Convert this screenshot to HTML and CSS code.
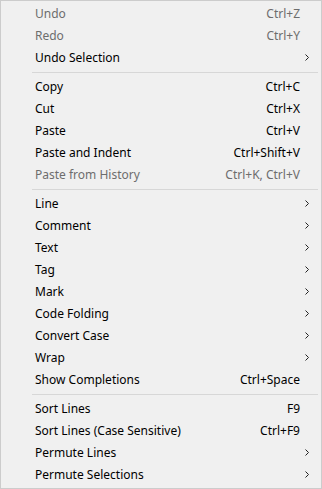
FILE: index.html
```html
<!DOCTYPE html>
<html>
<head>
<meta charset="utf-8">
<link rel="stylesheet" href="styles.css">
</head>
<body>
<div class="menu">
  <div class="item disabled"><span class="label">Undo</span><span class="key">Ctrl+Z</span></div>
  <div class="item disabled"><span class="label">Redo</span><span class="key">Ctrl+Y</span></div>
  <div class="item sub"><span class="label">Undo Selection</span><svg class="chev" viewBox="0 0 4 7"><path d="M0.5 0.5 L3.5 3.5 L0.5 6.5"/></svg></div>
  <div class="sep"></div>
  <div class="item"><span class="label">Copy</span><span class="key">Ctrl+C</span></div>
  <div class="item"><span class="label">Cut</span><span class="key">Ctrl+X</span></div>
  <div class="item"><span class="label">Paste</span><span class="key">Ctrl+V</span></div>
  <div class="item"><span class="label">Paste and Indent</span><span class="key">Ctrl+Shift+V</span></div>
  <div class="item disabled"><span class="label">Paste from History</span><span class="key">Ctrl+K, Ctrl+V</span></div>
  <div class="sep"></div>
  <div class="item sub"><span class="label">Line</span><svg class="chev" viewBox="0 0 4 7"><path d="M0.5 0.5 L3.5 3.5 L0.5 6.5"/></svg></div>
  <div class="item sub"><span class="label">Comment</span><svg class="chev" viewBox="0 0 4 7"><path d="M0.5 0.5 L3.5 3.5 L0.5 6.5"/></svg></div>
  <div class="item sub"><span class="label">Text</span><svg class="chev" viewBox="0 0 4 7"><path d="M0.5 0.5 L3.5 3.5 L0.5 6.5"/></svg></div>
  <div class="item sub"><span class="label">Tag</span><svg class="chev" viewBox="0 0 4 7"><path d="M0.5 0.5 L3.5 3.5 L0.5 6.5"/></svg></div>
  <div class="item sub"><span class="label">Mark</span><svg class="chev" viewBox="0 0 4 7"><path d="M0.5 0.5 L3.5 3.5 L0.5 6.5"/></svg></div>
  <div class="item sub"><span class="label">Code Folding</span><svg class="chev" viewBox="0 0 4 7"><path d="M0.5 0.5 L3.5 3.5 L0.5 6.5"/></svg></div>
  <div class="item sub"><span class="label">Convert Case</span><svg class="chev" viewBox="0 0 4 7"><path d="M0.5 0.5 L3.5 3.5 L0.5 6.5"/></svg></div>
  <div class="item sub"><span class="label">Wrap</span><svg class="chev" viewBox="0 0 4 7"><path d="M0.5 0.5 L3.5 3.5 L0.5 6.5"/></svg></div>
  <div class="item"><span class="label">Show Completions</span><span class="key">Ctrl+Space</span></div>
  <div class="sep"></div>
  <div class="item"><span class="label">Sort Lines</span><span class="key">F9</span></div>
  <div class="item"><span class="label">Sort Lines (Case Sensitive)</span><span class="key">Ctrl+F9</span></div>
  <div class="item sub"><span class="label">Permute Lines</span><svg class="chev" viewBox="0 0 4 7"><path d="M0.5 0.5 L3.5 3.5 L0.5 6.5"/></svg></div>
  <div class="item sub"><span class="label">Permute Selections</span><svg class="chev" viewBox="0 0 4 7"><path d="M0.5 0.5 L3.5 3.5 L0.5 6.5"/></svg></div>
</div>
</body>
</html>
```
FILE: styles.css
```css
html, body {
  margin: 0;
  padding: 0;
  background: #f0f0f0;
}
.menu {
  width: 322px;
  height: 489px;
  box-sizing: border-box;
  border: 1px solid #cccccc;
  background: #f0f0f0;
  padding: 2px 2px 2px 2px;
  font-family: "Noto Sans", sans-serif;
  font-size: 12px;
  color: #000;
  display: flex;
  flex-direction: column;
}
.item {
  height: 22px;
  display: flex;
  align-items: center;
  padding-left: 32px;
  padding-right: 19px;
  padding-bottom: 1px;
  box-sizing: border-box;
}
.item .label {
  flex: 1;
}
.item .key {
  text-align: right;
}
.item.disabled {
  color: #6d6d6d;
}
.item.sub {
  padding-right: 10px;
  padding-bottom: 0;
}
.chev {
  width: 4px;
  height: 7px;
  fill: none;
  stroke: #222;
  stroke-width: 1;
  margin-bottom: 1px;
}
.item.sub .label {
  margin-bottom: 1px;
}
.sep {
  height: 7px;
  margin-left: 29px;
  margin-right: 1px;
  display: flex;
  align-items: center;
}
.sep::before {
  content: "";
  flex: 1;
  height: 1px;
  background: #d7d7d7;
}
```
